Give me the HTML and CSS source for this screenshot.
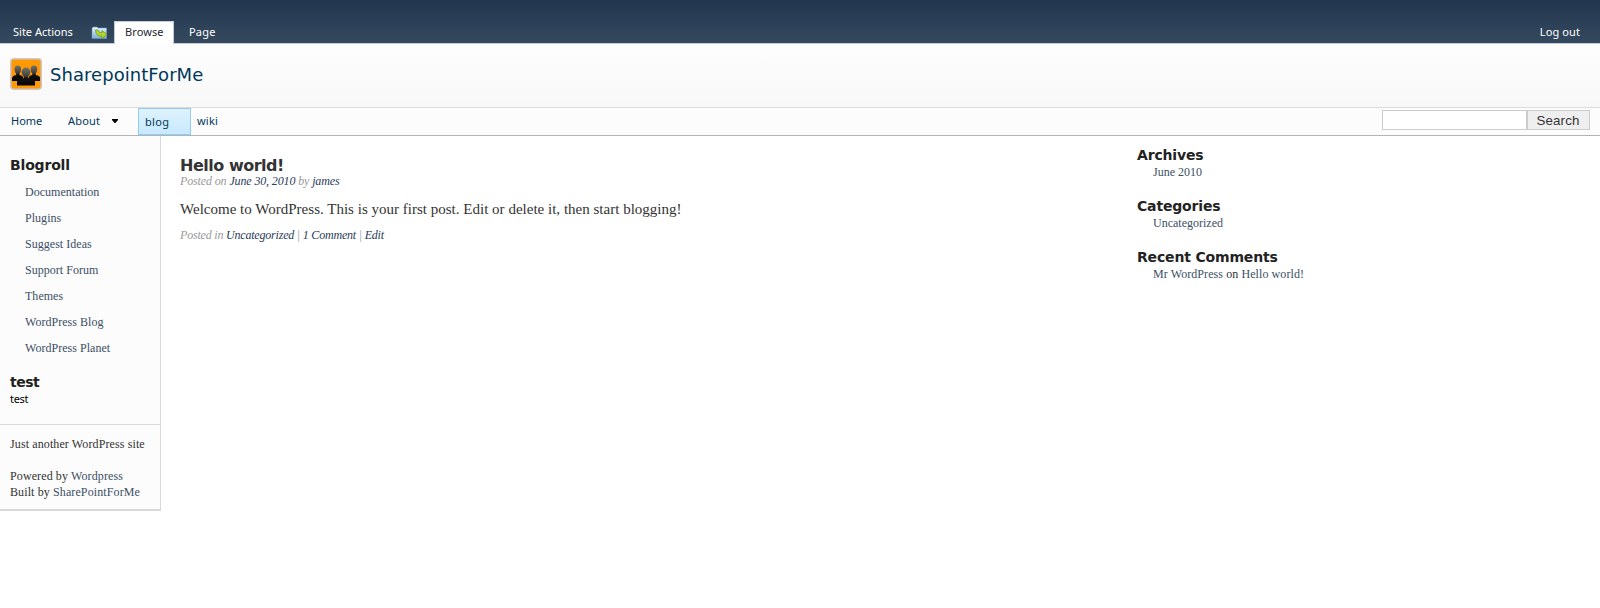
FILE: index.html
```html
<!DOCTYPE html>
<html lang="en">
<head>
<meta charset="utf-8">
<title>SharepointForMe</title>
<link rel="stylesheet" href="styles.css">
</head>
<body>
<header class="ribbon">
  <a class="actions">Site Actions</a>
  <svg class="folder" width="17" height="14" viewBox="0 0 17 14">
    <defs><linearGradient id="f" x1="0" y1="0" x2="0" y2="1"><stop offset="0" stop-color="#e6f3fc"/><stop offset="1" stop-color="#7fadd6"/></linearGradient></defs>
    <path d="M1 2.500 2 1H6L7 2H15.500V12.500H1Z" fill="url(#f)" stroke="#6f9fc8" stroke-width=".5"/>
    <path d="M4.500 4H7Q7 6.800 11 6.800V4.500L16 8.500 11 12.500V10.300Q4.500 10.300 4.500 4Z" fill="#b4d629" stroke="#6c9812" stroke-width=".7"/>
  </svg>
  <a class="tab">Browse</a>
  <a class="page">Page</a>
  <a class="logout">Log out</a>
</header>
<div class="banner">
  <svg class="logo" width="32" height="32" viewBox="0 0 32 32">
    <defs><linearGradient id="p" x1="0" y1="0" x2="0" y2="1"><stop offset="0" stop-color="#75716b"/><stop offset=".45" stop-color="#45423e"/><stop offset=".6" stop-color="#111"/><stop offset="1" stop-color="#050505"/></linearGradient></defs>
    <rect x=".7" y=".7" width="30.600" height="30.600" rx="3" fill="#ff9a05" stroke="#cbc8d2" stroke-width="1.400"/>
    <path d="M4.500 11a3.300 3.500 0 0 1 6.600 0Q11 14 9.500 15.500V17Q14 17.500 14 23H2V20Q2.500 17.500 6.100 17V15.500Q4.500 14 4.500 11Z" fill="url(#p)"/>
    <path d="M20.700 11a3.300 3.500 0 0 1 6.600 0Q27 14 25.700 15.500V17Q30 17.500 30 20V23H18Q18 17.500 22.300 17V15.500Q20.700 14 20.700 11Z" fill="url(#p)"/>
    <path d="M11.500 14a4.500 4.400 0 0 1 9 0Q20 17.500 18 19V20.500Q25 21 25 24V27.500H7V24Q7 21 14 20.500V19Q12 17.500 11.500 14Z" fill="url(#p)"/>
  </svg>
  <h1 class="title">SharepointForMe</h1>
</div>
<nav class="menu">
  <a class="home">Home</a>
  <a class="about">About</a>
  <svg class="arrow" width="6" height="4" viewBox="0 0 6 4"><path d="M0 0H6V1L3.500 4H2.500L0 1Z"/></svg>
  <a class="current">blog</a>
  <a class="wiki">wiki</a>
  <form class="search"><input class="query" type="text" aria-label="Search"><button class="go" type="button">Search</button></form>
</nav>
<div class="columns">
  <aside class="sidebar">
    <div class="widgets">
      <h3 class="heading">Blogroll</h3>
      <ul class="links">
        <li><a>Documentation</a></li><li><a>Plugins</a></li><li><a>Suggest Ideas</a></li><li><a>Support Forum</a></li><li><a>Themes</a></li><li><a>WordPress Blog</a></li><li><a>WordPress Planet</a></li>
      </ul>
      <h3 class="heading test-heading">test</h3>
      <div class="test">test</div>
    </div>
    <div class="about-site">
      <p class="tagline">Just another WordPress site</p>
      <p class="credit">Powered by <a>Wordpress</a></p>
      <p class="credit">Built by <a>SharePointForMe</a></p>
    </div>
  </aside>
  <main class="post">
    <h2 class="post-title">Hello world!</h2>
    <div class="meta posted">Posted on <a>June 30, 2010</a> by <a>james</a></div>
    <p class="entry">Welcome to WordPress. This is your first post. Edit or delete it, then start blogging!</p>
    <div class="meta filed">Posted in <a>Uncategorized</a> | <a>1 Comment</a> | <a>Edit</a></div>
  </main>
  <aside class="extras">
    <section class="extra"><h3 class="heading">Archives</h3><div class="item"><a>June 2010</a></div></section>
    <section class="extra"><h3 class="heading">Categories</h3><div class="item"><a>Uncategorized</a></div></section>
    <section class="extra"><h3 class="heading">Recent Comments</h3><div class="item comment"><a>Mr WordPress</a> on <a>Hello world!</a></div></section>
  </aside>
</div>
</body>
</html>
```
FILE: styles.css
```css
* { box-sizing: border-box; }
body { margin: 0; background: #fff; color: #333; font: 12px/16px "Liberation Serif", serif; }
h1, h2, h3, p, ul { margin: 0; padding: 0; }
ul { list-style: none; }
a { color: #3b4f65; }
svg { flex: none; }
.ribbon { height: 44px; padding-top: 21px; display: flex; background: linear-gradient(#21374f, #35495e); border-bottom: 1px solid #c5cbdc; font: 11px/22px "Noto Sans", sans-serif; letter-spacing: .1px; }
.ribbon a { color: #fff; }
.actions { width: 78px; padding-left: 13px; white-space: nowrap; letter-spacing: 0; }
.folder { margin: 5px 6px 0 13px; }
.ribbon .tab { width: 60px; height: 23px; padding-left: 10px; background: #fff; border: 1px solid #c5cbdc; border-bottom: 0; line-height: 20px; color: #23272f; }
.page { margin-left: 15px; letter-spacing: .2px; }
.logout { margin-left: auto; margin-right: 20px; }
.banner { height: 64px; display: flex; padding: 14px 0 0 10px; background: linear-gradient(#fdfdfd, #f8f8f8); border-bottom: 1px solid #dcdcdc; }
.title { margin-left: 8px; font: 18px/34px "DejaVu Sans", sans-serif; letter-spacing: .05px; color: #003759; }
.menu { height: 28px; display: flex; background: #fcfcfc; border-bottom: 1px solid #b4b4b4; font: 11px/26px "Noto Sans", sans-serif; }
.menu a { color: #003759; }
.home { width: 57px; padding-left: 11px; }
.about { width: 44px; padding-left: 11px; letter-spacing: .2px; }
.arrow { margin: 11px 20px 0 11px; }
.menu .current { width: 53px; height: 27px; padding-left: 6px; line-height: 26px; letter-spacing: .3px; background: linear-gradient(#def2fd, #c8e9ff); border: 1px solid #91cdee; }
.wiki { margin-left: 6px; letter-spacing: .2px; }
.search { margin: 2px 10px 0 auto; display: flex; height: 20px; }
.query { width: 145px; border: 1px solid #ccc; padding: 0; background: #fff; }
.go { width: 63px; border: 1px solid #ccc; padding: 1px 1px 0 0; background: #efefef; font: 13.300px/18px "Liberation Sans", sans-serif; letter-spacing: .15px; color: #333; }
.columns { display: flex; align-items: flex-start; }
.sidebar { width: 161px; height: 375px; background: #fcfcfc; border-right: 1px solid #d9d9d9; border-bottom: 2px solid #d9d9d9; }
.widgets { height: 289px; padding: 20px 0 0 10px; border-bottom: 1px solid #d9d9d9; }
.heading { font: bold 14px/18px "DejaVu Sans", sans-serif; letter-spacing: -.17px; color: #222; white-space: nowrap; }
.links { padding: 5px 0 0 15px; }
.links li { height: 26px; line-height: 26px; letter-spacing: .03px; }
.test-heading { margin-top: 12px; letter-spacing: -.5px; }
.test { font: 11px/16px "Noto Sans", sans-serif; letter-spacing: -.3px; color: #000; }
.about-site { padding: 11px 0 0 10px; white-space: nowrap; letter-spacing: .11px; }
.tagline { margin-bottom: 16px; }
.post { width: 957px; padding: 20px 0 0 19px; white-space: nowrap; }
.post-title { font: bold 16px/20px "DejaVu Sans", sans-serif; letter-spacing: -.48px; color: #333; }
.meta { font-style: italic; color: #999; line-height: 14px; }
.posted { margin-top: -2px; letter-spacing: -.13px; }
.filed { letter-spacing: -.2px; }
.meta a { color: #2a4058; }
.entry { margin: 11px 0 9px; font-size: 15px; line-height: 20px; letter-spacing: .01px; }
.extras { padding: 10px 0 0 19px; white-space: nowrap; }
.extra { height: 51px; }
.item { padding-left: 16px; line-height: 16px; }
.comment { letter-spacing: .08px; }
```
